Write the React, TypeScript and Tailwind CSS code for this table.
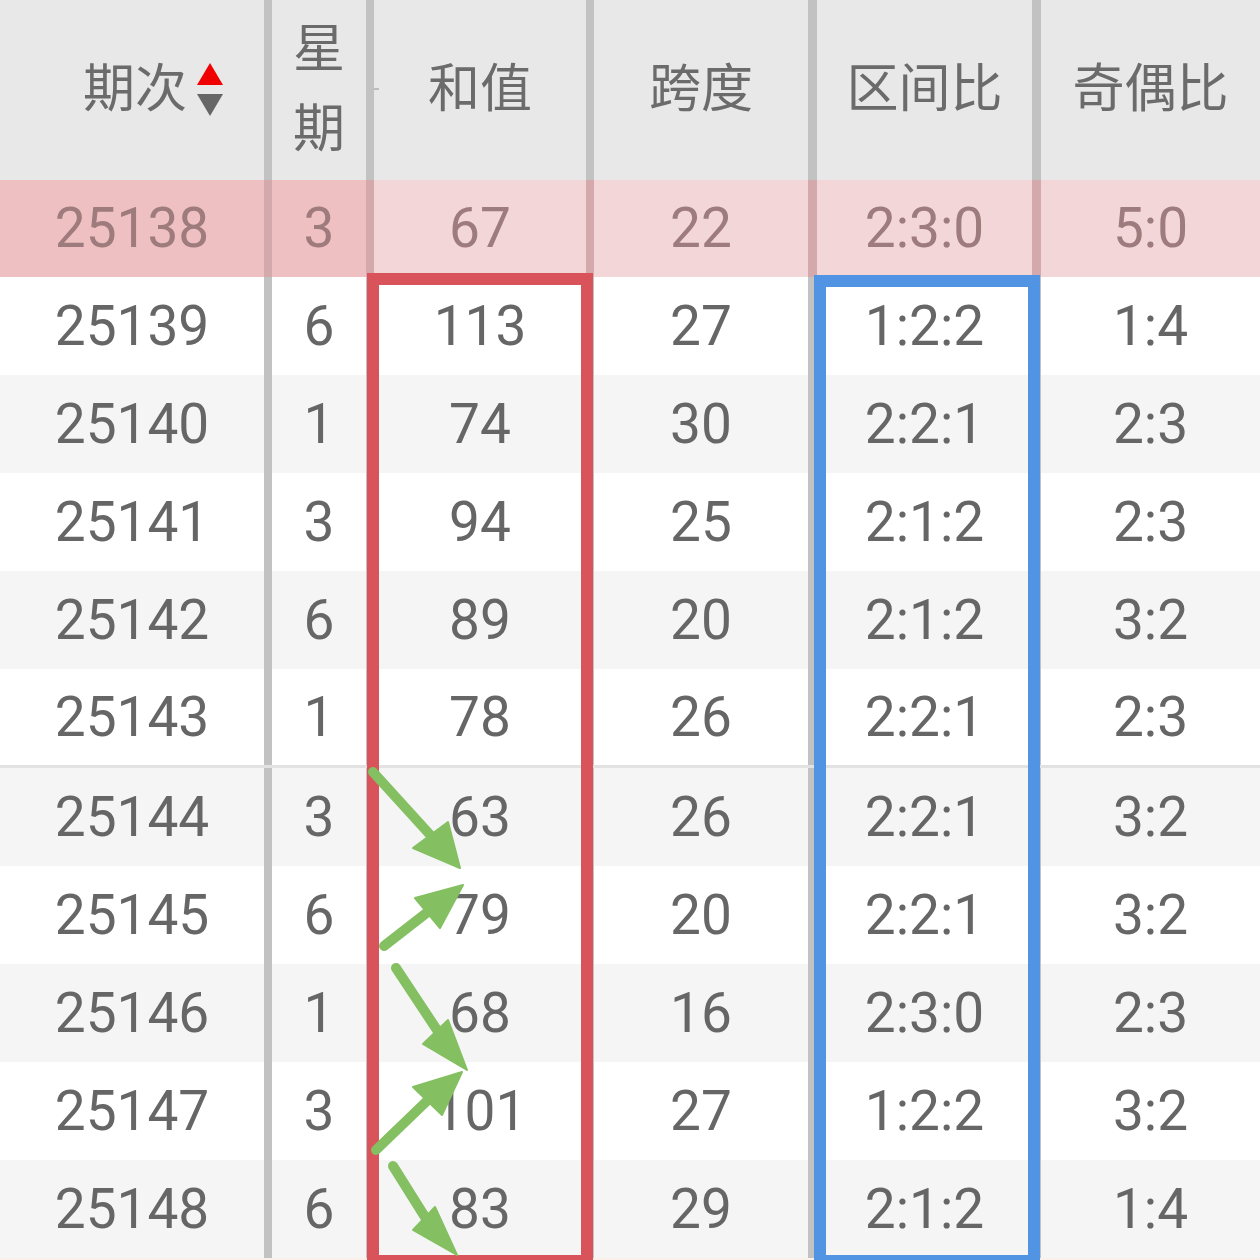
const rows = [
  ['25139', '6', '113', '27', '1:2:2', '1:4'],
  ['25140', '1', '74', '30', '2:2:1', '2:3'],
  ['25141', '3', '94', '25', '2:1:2', '2:3'],
  ['25142', '6', '89', '20', '2:1:2', '3:2'],
  ['25143', '1', '78', '26', '2:2:1', '2:3'],
  ['25144', '3', '63', '26', '2:2:1', '3:2'],
  ['25145', '6', '79', '20', '2:2:1', '3:2'],
  ['25146', '1', '68', '16', '2:3:0', '2:3'],
  ['25147', '3', '101', '27', '1:2:2', '3:2'],
  ['25148', '6', '83', '29', '2:1:2', '1:4'],
];

// column widths incl. the divider on the right
const cols = [
  'w-[272px] border-r-[8px]',
  'w-[102px] border-r-[8px]',
  'w-[220px] border-r-[8px]',
  'w-[223px] border-r-[9px]',
  'w-[224px] border-r-[9px]',
  'w-[219px]',
];

function SortIcon() {
  return (
    <svg width="26" height="54" viewBox="0 0 26 54" className="ml-[10px]">
      <polygon points="13,0 26,22 0,22" fill="#f00000" />
      <polygon points="0,31 26,31 13,53" fill="#666666" />
    </svg>
  );
}

const arrows = [
  { s: [373, 772], m: [433, 838], h: '460,868 413,848 448,822' },
  { s: [384, 946], m: [429, 911], h: '463,885 415,898 440,928' },
  { s: [396, 968], m: [437, 1030], h: '467,1070 423,1044 448,1020' },
  { s: [376, 1150], m: [429, 1099], h: '462,1072 413,1087 442,1115' },
  { s: [393, 1166], m: [425, 1217], h: '457,1255 413,1230 435,1207' },
];

export default function App() {
  return (
    <div className="relative h-[1260px] w-[1260px] overflow-hidden bg-white font-[Roboto,'Noto_Sans_CJK_SC',sans-serif] text-[#666666]">
      {/* header */}
      <div className="flex h-[180px] bg-[#e8e8e8] text-[52px] text-[#6b6b6b]">
        <div className={`${cols[0]} flex items-center justify-end border-[#c2c2c2] pr-[41px]`}>
          <span className="leading-none">期次</span>
          <SortIcon />
        </div>
        <div className={`${cols[1]} flex flex-col items-center justify-center border-[#c2c2c2] leading-[80px]`}>
          <span>星</span>
          <span>期</span>
        </div>
        <div className={`${cols[2]} relative flex items-center justify-center border-[#c2c2c2]`}>
          <span className="absolute left-0 top-[88px] h-[2px] w-[5px] bg-[#bdbdbd]" />
          和值
        </div>
        <div className={`${cols[3]} flex items-center justify-center border-[#c2c2c2]`}>跨度</div>
        <div className={`${cols[4]} flex items-center justify-center border-[#c2c2c2]`}>区间比</div>
        <div className={`${cols[5]} flex items-center justify-center`}>奇偶比</div>
      </div>

      {/* highlighted last draw */}
      <div className="flex h-[97px] text-[55px] text-[#9e7b7c]">
        {['25138', '3', '67', '22', '2:3:0', '5:0'].map((v, i) => (
          <div
            key={i}
            className={`${cols[i]} flex items-center justify-center border-[#d3a9ab] ${i < 2 ? 'bg-[#efc0c1]' : 'bg-[#f2d6d8]'}`}
          >
            {v}
          </div>
        ))}
      </div>

      {rows.map((r, ri) => (
        <div
          key={r[0]}
          className={`flex text-[55px] ${ri % 2 === 1 ? 'bg-[#f5f5f5]' : 'bg-white'} ${ri === 4 ? 'h-[99px] border-b-[3px] border-[#e2e2e2]' : 'h-[98px]'}`}
        >
          {r.map((v, i) => (
            <div key={i} className={`${cols[i]} flex items-center justify-center border-[#c2c2c2]`}>
              {v}
            </div>
          ))}
        </div>
      ))}
      <div className="h-[2px] bg-[#fcefe8]" />

      {/* annotations */}
      <div className="pointer-events-none absolute inset-0">
        <div className="absolute left-[367px] top-[273px] h-[994px] w-[226px] border-[12px] border-[#d9535a]" />
        <div className="absolute left-[814px] top-[275px] h-[992px] w-[226px] border-[12px] border-[#5294e4]" />
        <svg width="1260" height="1260" className="absolute left-0 top-0">
          {arrows.map((a, i) => (
            <g key={i} fill="#84c061" stroke="#84c061">
              <line x1={a.s[0]} y1={a.s[1]} x2={a.m[0]} y2={a.m[1]} strokeWidth="10" strokeLinecap="round" />
              <polygon points={a.h} strokeWidth="2" strokeLinejoin="round" />
            </g>
          ))}
        </svg>
      </div>
    </div>
  );
}
